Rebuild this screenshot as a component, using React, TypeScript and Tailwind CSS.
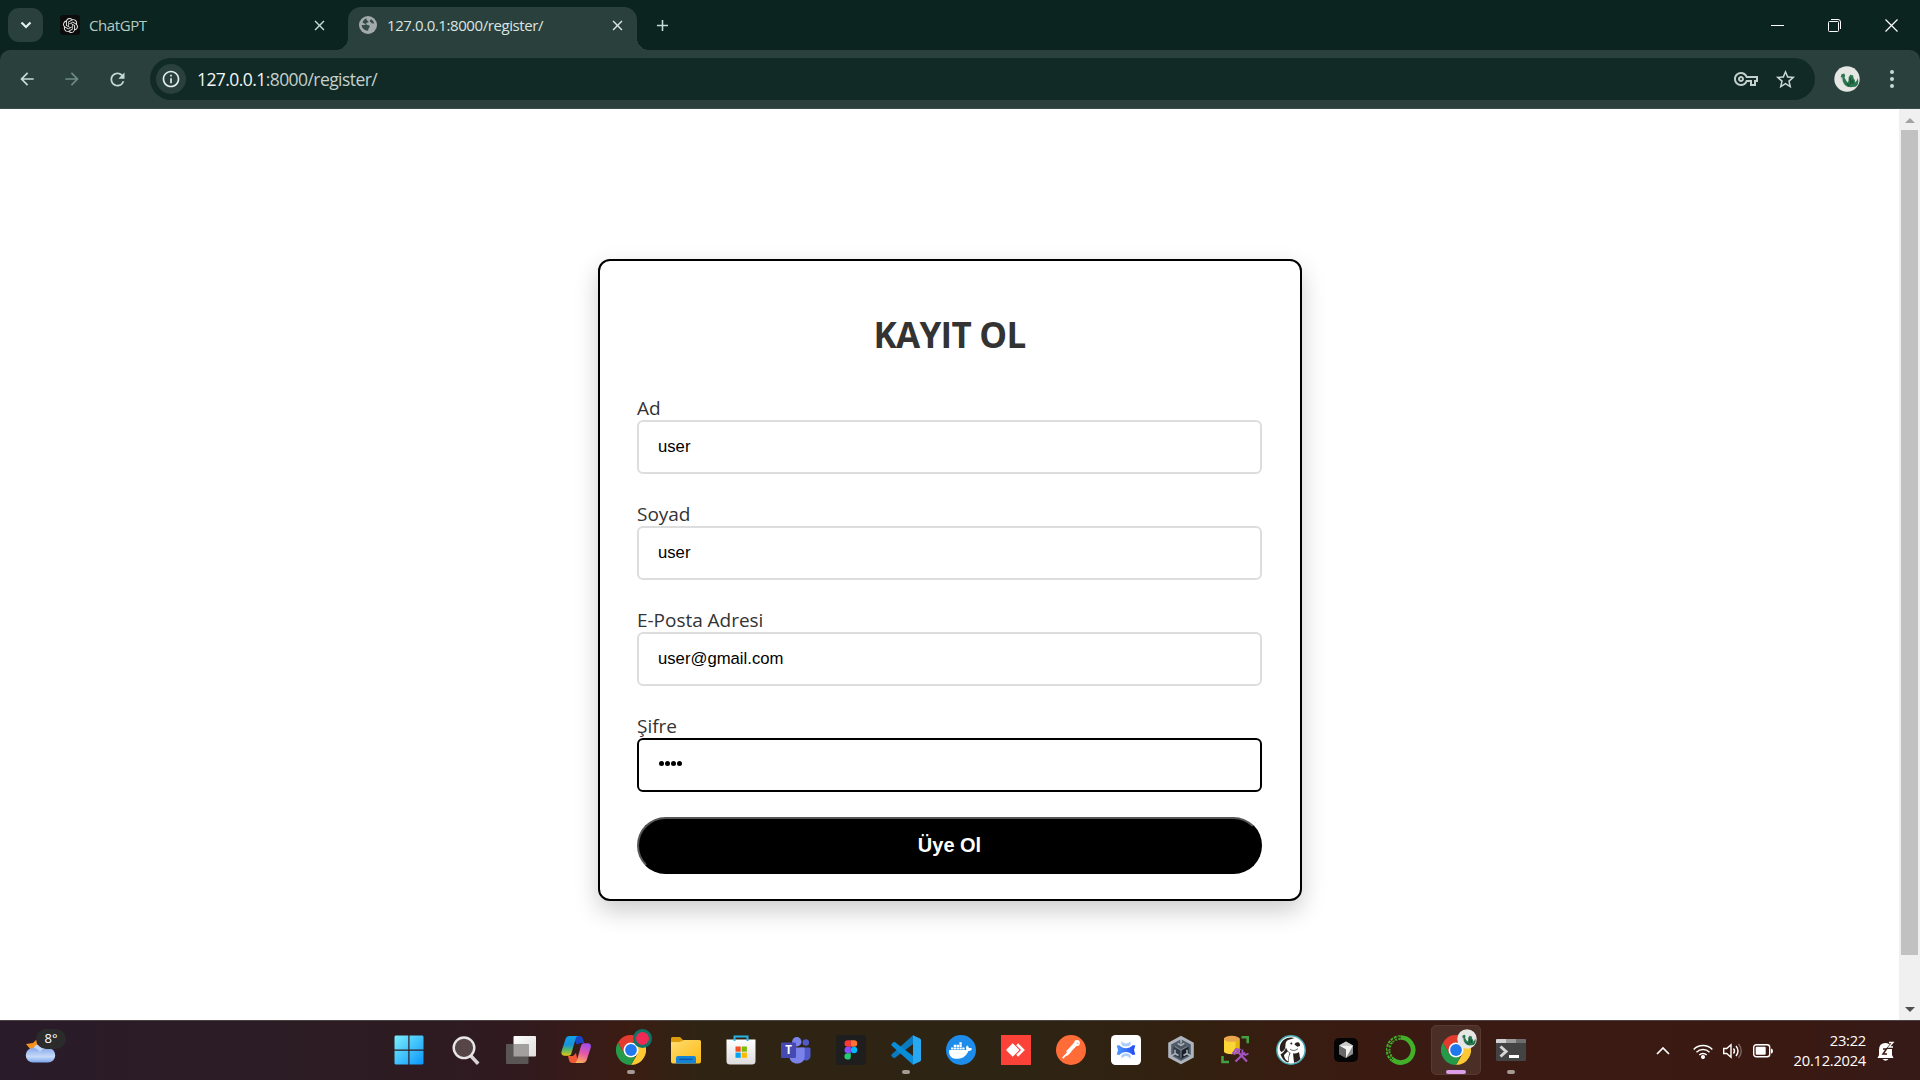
import React from "react";
import { SiOpenai, SiDocker } from "react-icons/si";
import { MdArrowBack, MdArrowForward, MdRefresh, MdInfoOutline, MdOutlineVpnKey, MdStarBorder, MdClose, MdAdd } from "react-icons/md";

const UI = "font-['Open_Sans','Noto_Sans',sans-serif]";

function Globe() {
  return (
    <svg viewBox="0 0 18 18" className="h-[18px] w-[18px]">
      <circle cx="9" cy="9" r="9" fill="#a3aaae" />
      <path d="M8 2.2c-1 1-.6 2.2.6 2.5 1.400.3 1 1.500 0 1.800-1.300.3-1.800 1.200-1 2 .9.9 2 .4 2.900 1.300.8.8-.2 1.600-.7 2.300-.4.600-.3 1.700-.9 2.700C5 14.600 2.700 11.800 2.700 9H6c.6 0 .7-.7.200-1L3.500 6.400C4.400 4 6 2.600 8 2.200zM12 3.200c1.600.9 2.700 2.300 3.100 4.100-.8.4-1.700.5-2.300-.3-.6-.7-1.700-.5-1.900-1.500-.2-.9.300-1.700 1.100-2.300z" fill="#344b47" />
    </svg>
  );
}

function Dragon({ size }: { size: "sm" | "lg" }) {
  return (
    <svg viewBox="0 0 26 26" className={size === "lg" ? "h-[26px] w-[26px]" : "h-5 w-5"}>
      <circle cx="13" cy="13" r="12.700" fill="#e6e6e5" />
      <path d="M7 10l2 4 2 4" stroke="#b9c4be" strokeWidth="2" fill="none" />
      <path d="M7.500 8.200l2.700-.6 1 1.800-.7 2 1.500 2.800 1.500 2.200 1-1.400.2-4 2-2.400 1.300 1 1-.6.6 3.200 1.200 1.800.6 2.500 1.400-2 1-2.300.6 3.500-1 3.500-2 1.500-5 .6-3-.6-2.600-1.700-1.900-3.500-.3-3.700-1.700-1z" fill="#2a7850" />
      <path d="M16 12l1 3.500-1 3M18.500 14l.5 4M13 17.500l2 2.500" stroke="#14502f" strokeWidth="1.200" fill="none" />
    </svg>
  );
}

function ChromeLogo() {
  return (
    <svg viewBox="0 0 30 30" className="h-[30px] w-[30px]">
      <path d="M28 7.500A15 15 0 0 1 15 30L21.500 18.700 21 7.500z" fill="#fcc934" />
      <path d="M15 30A15 15 0 0 1 2 7.500l6.500 11.200L15 22.500l4.500-.7z" fill="#259b4a" />
      <path d="M2 7.500A15 15 0 0 1 28 7.500H15l-5 3-1.500 8.200z" fill="#e33b2e" />
      <circle cx="15" cy="15" r="7.500" fill="#fff" />
      <circle cx="15" cy="15" r="5.900" fill="#1f78ee" />
    </svg>
  );
}

function WindowsLogo() {
  return (
    <svg viewBox="0 0 30 30" className="h-[30px] w-[30px]">
      <defs>
        <linearGradient id="win" x1="0" y1="0" x2="30" y2="30" gradientUnits="userSpaceOnUse">
          <stop stopColor="#7df0fc" />
          <stop offset="1" stopColor="#0894fb" />
        </linearGradient>
      </defs>
      <path d="M1.500.5h12.800v14H.5v-13zM15.500.5h13l1 1v13h-14zM.5 15.700h13.800v13.800H1.500l-1-1zM15.500 15.700h14v12.800l-1 1h-13z" fill="url(#win)" />
    </svg>
  );
}

function SearchGlyph() {
  return (
    <svg viewBox="0 0 30 30" className="h-[30px] w-[30px]">
      <path d="M19.500 20.500l6.500 7" stroke="#d9d5d7" strokeWidth="3.500" strokeLinecap="square" />
      <circle cx="13" cy="12.800" r="10.300" fill="#564549" stroke="#e8e6e7" strokeWidth="2.400" />
    </svg>
  );
}

function TaskView() {
  return (
    <svg viewBox="0 0 30 30" className="h-[30px] w-[30px]">
      <defs>
        <linearGradient id="tv" x1="0" y1="0" x2="1" y2="1">
          <stop stopColor="#fff" />
          <stop offset="1" stopColor="#dedcdd" />
        </linearGradient>
      </defs>
      <rect x="7.500" y="1" width="22.500" height="20.500" rx="1" fill="url(#tv)" />
      <rect x="0" y="9" width="22.500" height="20" rx="1" fill="#5a5656" />
      <path d="M7.500 9h15v12.500h-15z" fill="#a29f9f" />
    </svg>
  );
}

function Copilot() {
  return (
    <svg viewBox="0 0 30 30" className="h-[30px] w-[30px]">
      <defs>
        <linearGradient id="cpa" x1="0" y1="0" x2="0" y2="1">
          <stop stopColor="#10a1e8" />
          <stop offset=".45" stopColor="#1794dc" />
          <stop offset=".7" stopColor="#55b868" />
          <stop offset="1" stopColor="#e7c514" />
        </linearGradient>
        <linearGradient id="cpb" x1="0.600" y1="0" x2="0.300" y2="1">
          <stop stopColor="#a24bea" />
          <stop offset=".5" stopColor="#e65aa4" />
          <stop offset="1" stopColor="#fdb25a" />
        </linearGradient>
      </defs>
      <path d="M13 1h5.500c2 0 3 1 3.500 3l1.200 4h-3.700l-4 1.500z" fill="#1944c4" />
      <path d="M17 28h-5.500c-2 0-3-1-3.500-3l-1-4h5l3-3z" fill="#f15a35" />
      <path d="M8.500 1h9c-1.500 0-2.300 1-2.800 2.600L10.500 18c-.5 1.700-1.400 2.700-3 2.700h-4C.8 20.700-.1 18.800.6 16.300L4.500 4c.7-2 2-3 4-3z" fill="url(#cpa)" />
      <path d="M21.500 28H13c1.500 0 2.300-1 2.800-2.600L20 11c.5-1.700 1.400-2.700 3-2.700h3.800c2.700 0 3.600 1.900 2.900 4.400L25.700 25c-.7 2-2.200 3-4.200 3z" fill="url(#cpb)" />
    </svg>
  );
}

function Explorer() {
  return (
    <svg viewBox="0 0 30 30" className="h-[30px] w-[30px]">
      <defs>
        <linearGradient id="fld" x1="0" y1="0" x2="1" y2="1">
          <stop stopColor="#ffdc72" />
          <stop offset="1" stopColor="#fcba12" />
        </linearGradient>
      </defs>
      <path d="M0 3.500Q0 2 1.500 2H9l3.500 3.500H20V12H0z" fill="#dd9c0c" />
      <path d="M0 7h9l4-2h15.500Q30 5 30 6.500v20q0 2-2 2H2q-2 0-2-2z" fill="url(#fld)" />
      <path d="M5 28.500V23q0-2 2-2h16q2 0 2 2v5.500z" fill="#1584d8" />
      <path d="M8.500 24.300h13" stroke="#0c559b" strokeWidth="1.300" />
    </svg>
  );
}

function Store() {
  return (
    <svg viewBox="0 0 30 30" className="h-[30px] w-[30px]">
      <defs>
        <linearGradient id="sto" x1="0" y1="0" x2="0" y2="1">
          <stop stopColor="#fff" />
          <stop offset="1" stopColor="#dcdcdc" />
        </linearGradient>
      </defs>
      <path d="M.5 4.500h29V26q0 3.500-3.500 3.500H4Q.5 29.500.5 26z" fill="url(#sto)" />
      <path d="M8.500 6V1.500h13V6" fill="none" stroke="#27b3e8" strokeWidth="2" />
      <path d="M9.500 11.500h5.200v5.200H9.500z" fill="#f25022" />
      <path d="M15.700 11.500h5.200v5.200h-5.200z" fill="#7fba00" />
      <path d="M9.500 17.600h5.200v5.200H9.500z" fill="#00a4ef" />
      <path d="M15.700 17.600h5.200v5.200h-5.200z" fill="#ffb900" />
    </svg>
  );
}

function Teams() {
  return (
    <svg viewBox="0 0 30 30" className="h-[30px] w-[30px]">
      <circle cx="24.800" cy="7.500" r="3.200" fill="#5059c9" />
      <path d="M19 12.500h9q1.500 0 1.500 1.500v6.500c0 3-2 5-5 5l-5-1z" fill="#5059c9" />
      <circle cx="15.800" cy="6.800" r="4.700" fill="#7b83eb" />
      <path d="M8.500 12.500h14q1.200 0 1.200 1.200v7.500c0 5-3.500 7.300-7.500 7.300s-7.700-2.500-7.700-7.300z" fill="#7b83eb" />
      <rect x="0" y="7.500" width="15" height="15.500" rx="1.300" fill="#4549b4" />
      <text x="7.500" y="19.300" textAnchor="middle" fontSize="11.500" fontWeight="700" fill="#fff" fontFamily="Open Sans, sans-serif">T</text>
    </svg>
  );
}

function Figma() {
  return (
    <svg viewBox="0 0 30 30" className="h-[30px] w-[30px]">
      <rect width="30" height="30" rx="2.500" fill="#1e1e1e" />
      <path d="M14.800 5.200h-3a3.200 3.200 0 0 0 0 6.500h3z" fill="#ff3737" />
      <path d="M14.800 5.200h3.200a3.200 3.200 0 0 1 0 6.500h-3.200z" fill="#ff7237" />
      <path d="M14.800 11.700h-3a3.200 3.200 0 0 0 0 6.500h3z" fill="#874fff" />
      <circle cx="18" cy="15" r="3.200" fill="#00b6ff" />
      <path d="M14.800 18.200h-3a3.200 3.200 0 1 0 3 3.200z" fill="#24cb71" />
    </svg>
  );
}

function VsCode() {
  return (
    <svg viewBox="0 0 30 30" className="h-[30px] w-[30px]">
      <path d="M22 .3L.8 19.300c-.6.600-.6 1.300 0 1.900l1.600 1.500c.5.400 1.100.4 1.700 0L26 6z" fill="#0a7bc0" />
      <path d="M22 29.700L.8 10.700c-.6-.6-.6-1.300 0-1.900l1.600-1.500c.5-.4 1.100-.4 1.700 0L26 24z" fill="#0a8dd8" />
      <path d="M22 .2l7 3.200q1 .5 1 1.700v19.800q0 1.200-1 1.700l-7 3.200z" fill="#27a8f0" />
    </svg>
  );
}

function DockerLogo() {
  return (
    <span className="flex h-[30px] w-[30px] items-center justify-center rounded-full bg-[#1d8cea]">
      <SiDocker size={23} color="#fff" />
    </span>
  );
}

function AnyDesk() {
  return (
    <svg viewBox="0 0 30 30" className="h-[30px] w-[30px]">
      <path d="M0 0h30v30H0z" fill="#fb4238" />
      <path d="M5 15l6.700-6.700 6.700 6.700-6.700 6.700z" fill="#fff" />
      <path d="M16.200 9.200L22 15l-5.800 5.800" fill="none" stroke="#fff" strokeWidth="2.700" />
    </svg>
  );
}

function Postman() {
  return (
    <svg viewBox="0 0 30 30" className="h-[30px] w-[30px]" fill="none">
      <circle cx="15" cy="15" r="15" fill="#ff6c37" />
      <path d="M12.500 16.500l6-6.500" stroke="#fff" strokeWidth="4.200" strokeLinecap="round" />
      <path d="M12.500 17l-5.300 5.600M15 16.200L11 20" stroke="#fff" strokeWidth="1.700" strokeLinecap="round" />
      <path d="M11 15l6-6.200M14.500 17.500l5.500-5" stroke="#ff6c37" strokeWidth=".6" />
      <circle cx="21" cy="8" r="2.900" fill="#fff" />
      <path d="M20.800 7.800l1.700.9" stroke="#ff6c37" strokeWidth=".8" />
    </svg>
  );
}

function Tracker() {
  return (
    <svg viewBox="0 0 30 30" className="h-[30px] w-[30px]">
      <defs>
        <linearGradient id="trk" x1="0" y1="0" x2="1" y2="0">
          <stop stopColor="#4f9bff" />
          <stop offset="1" stopColor="#1f49f5" />
        </linearGradient>
      </defs>
      <rect width="30" height="30" rx="4.500" fill="#fff" />
      <path d="M10.500 6.200c2.700 3 6.300 3 9 0l.2 3c-1.700 3-7.700 3-9.400 0z" fill="#a9ccfb" />
      <path d="M10.500 23.800c2.700-3.700 6.300-3.700 9 0l.2-3c-1.700-3.500-7.700-3.500-9.400 0z" fill="#a9ccfb" />
      <path d="M5.700 10.500l2.700-.2c3.500 4 9.700 4 13.200 0l2.700.2-1.300 4.500 1.300 4.500-2.700.4c-3.500-4-9.700-4-13.200 0l-2.700-.4L7 15z" fill="url(#trk)" />
    </svg>
  );
}

function UnityHub() {
  return (
    <svg viewBox="0 0 30 30" className="h-[30px] w-[30px]">
      <path d="M15 .8l12.800 7v14.700L15 29.300 2.200 22.500V7.800z" fill="#adb4be" />
      <path d="M15 4.200l9.800 5.400v11L15 26l-9.800-5.400v-11z" fill="#525c68" />
      <path d="M15 7.500l7.500 4.200-7.500 4.300-7.500-4.300z" fill="#4c5662" />
      <path d="M7.500 11.700L15 16v8l-7.500-4.200z" fill="#303946" />
      <path d="M22.500 11.700L15 16v8l7.500-4.200z" fill="#171f29" />
      <path d="M8.700 11.300L15 15l6.300-3.700M15 15v8" stroke="#7d8794" strokeWidth="1" fill="none" />
      <path d="M15 3.500v5M11.700 8.300l3.300 2 3.300-2M5 21l4.500-2.600M9 14.800v3.700l3.500 2M25 21l-4.500-2.600M21 14.800v3.700l-3.500 2" stroke="#adb4be" strokeWidth="1.500" fill="none" />
    </svg>
  );
}

function DbTools() {
  return (
    <svg viewBox="0 0 30 30" className="h-[30px] w-[30px]">
      <path d="M3 3.500v13c0 3.500 15.500 3.500 15.500 0v-13z" fill="#fbd435" />
      <path d="M14.500 5v14c3-.5 4-1.400 4-2.500v-13z" fill="#e3b414" />
      <ellipse cx="10.700" cy="3.800" rx="7.800" ry="3" fill="#e9a64d" />
      <path d="M20.500 2.300h6.200v6M1.500 21v6h6.500" fill="none" stroke="#45a042" strokeWidth="2.600" />
      <path d="M15.500 15.500l10.500 11M14.500 26.500l9.500-9" stroke="#a453c2" strokeWidth="2.200" />
      <path d="M12 18l3-4 3.500.5-5 4.500zM21.500 14.500l-.3 3.500 3.300 2 3-1.500" fill="none" stroke="#a453c2" strokeWidth="1.800" />
    </svg>
  );
}

function Beaver() {
  return (
    <svg viewBox="0 0 30 30" className="h-[30px] w-[30px]">
      <circle cx="15" cy="15" r="14.200" fill="#fff" stroke="#46aab3" strokeWidth="1.500" />
      <path d="M7 5.500C10 2.500 15 1.800 18.500 3L14 4.500C10.500 5 9.500 7 9.500 10.500c-.2 4-2 6-4.200 6.500-1.700-1.500-1.800-3.500-1.300-6C4.500 8.500 5.500 7 7 5.500z" fill="#2a211f" />
      <path d="M4.500 19.500C7 18 9 16 10 12.500c1 3 2.500 4.500 4.500 5.500-1.500 2.500-2 5-1.500 8.500l-1 1C8.500 26.500 6 23.500 4.500 19.500z" fill="#2a211f" />
      <path d="M8 20l3.500-3.500 2 1.500c-1 3-1.500 5.500-.8 8.500C9.500 25.500 8.300 23 8 20z" fill="#fff" />
      <path d="M17 18.500c2.500 0 4.500-.5 6-1.500l.5 2.500c0 2 .5 3 1 4.500-2 2.200-4 3-6.500 3.700z" fill="#2a211f" />
      <path d="M18.500 9.500c1-2.500 4-3 5.300-.8l.2 2.300-2.700.8z" fill="#2a211f" />
      <circle cx="15.300" cy="8.500" r="1" fill="#2a211f" />
      <path d="M14 14c2 2 5.500 2 8-.5" stroke="#2a211f" strokeWidth=".7" fill="none" />
    </svg>
  );
}

function Cursor() {
  return (
    <svg viewBox="0 0 30 30" className="h-[30px] w-[30px]">
      <rect x="3" y="3" width="24" height="24" rx="5" fill="#050505" />
      <path d="M15 6.500l7 4v8.500l-7 4-7-4v-8.500z" fill="#8e8e8e" />
      <path d="M8 10.500l7-4 7 4z" fill="#c9c9c9" />
      <path d="M8 10.500h14L15 23v-8.500z" fill="#f2f2f2" />
      <path d="M8 10.500l7 4V23l-7-4z" fill="#686868" />
    </svg>
  );
}

function Anaconda() {
  return (
    <svg viewBox="0 0 30 30" className="h-[30px] w-[30px]" fill="none">
      <path d="M14.500 2.500a12.500 12.500 0 1 1-8 22" stroke="#43b02a" strokeWidth="4.700" />
      <path d="M14.500 2.500A12.500 12.500 0 0 0 6.500 24.500" stroke="#43b02a" strokeWidth="4.700" strokeDasharray="2.600 .9" />
      <path d="M14.500 2.500A12.500 12.500 0 0 0 6.500 24.500" stroke="#35160f" strokeWidth="1" strokeDasharray="2 1.500" />
      <path d="M13 1.200L11 5M7 4l1.500 3M3 9l4 1.500M1 14l4.500-1M1.500 20l4-2.500" stroke="#35160f" strokeWidth=".9" />
    </svg>
  );
}

function Terminal() {
  return (
    <svg viewBox="0 0 30 30" className="h-[30px] w-[30px]">
      <rect x="0" y="4" width="30" height="22" rx="1.500" fill="#434343" />
      <path d="M0 8V5q0-1 1-1h9v4z" fill="#d2d2d2" />
      <path d="M10 4h10v4H10z" fill="#9b9b9b" />
      <path d="M20 4h9q1 0 1 1v3H20z" fill="#6d6d6d" />
      <path d="M4.500 11.500l5.500 5-5.500 5" fill="none" stroke="#d6d6d6" strokeWidth="3" />
      <path d="M13 21.500h10" stroke="#fff" strokeWidth="3" />
    </svg>
  );
}

function Weather() {
  return (
    <svg viewBox="0 0 32 32" className="h-8 w-8">
      <defs>
        <linearGradient id="cl" x1="0" y1="0" x2="0" y2="1">
          <stop stopColor="#86a9ea" />
          <stop offset=".6" stopColor="#c8daf8" />
          <stop offset="1" stopColor="#7aa5ed" />
        </linearGradient>
      </defs>
      <path d="M1 10l7-1 4-4v9l-6 2z" fill="#f6931e" />
      <path d="M8 16a7.500 7.500 0 0 1 14-2l-2 8H8z" fill="#c2d6fa" />
      <path d="M8 14c3 0 5.500 1.500 7 4 2-3 4.500-4 8-4a7 7 0 0 1 0 14.500H8A7.200 7.200 0 0 1 8 14z" fill="url(#cl)" />
    </svg>
  );
}

const apps: { id: string; icon: React.ReactNode; mark?: "dot" | "active"; badge?: "record" | "profile" }[] = [
  { id: "search", icon: <SearchGlyph /> },
  { id: "taskview", icon: <TaskView /> },
  { id: "copilot", icon: <Copilot /> },
  { id: "chrome", icon: <ChromeLogo />, mark: "dot", badge: "record" },
  { id: "explorer", icon: <Explorer /> },
  { id: "store", icon: <Store /> },
  { id: "teams", icon: <Teams /> },
  { id: "figma", icon: <Figma /> },
  { id: "vscode", icon: <VsCode />, mark: "dot" },
  { id: "docker", icon: <DockerLogo /> },
  { id: "anydesk", icon: <AnyDesk /> },
  { id: "postman", icon: <Postman /> },
  { id: "tracker", icon: <Tracker /> },
  { id: "unity", icon: <UnityHub /> },
  { id: "db", icon: <DbTools /> },
  { id: "dbeaver", icon: <Beaver /> },
  { id: "cursor", icon: <Cursor /> },
  { id: "anaconda", icon: <Anaconda /> },
  { id: "chrome-profile", icon: <ChromeLogo />, mark: "active", badge: "profile" },
  { id: "terminal", icon: <Terminal />, mark: "dot" },
];

function TabStrip() {
  return (
    <div className="flex h-[50px] bg-[#0b2420] text-[#dbe5e2]">
      <div className="flex h-full w-[348px] items-center pl-2">
        <div className="flex h-[34px] w-[35px] items-center justify-center rounded-[11px] bg-[#29403c]">
          <svg viewBox="0 0 12 8" className="h-2 w-3"><path d="M1.500 1.500L6 6l4.500-4.500" fill="none" stroke="#e4f0ec" strokeWidth="2.200" /></svg>
        </div>
        <div className="ml-[17px] flex h-5 w-5 items-center justify-center rounded-[3px] bg-[#0c0c0d]">
          <SiOpenai size={15} color="#e6e6e6" />
        </div>
        <span className="ml-[9px] w-[222px] text-[15px] tracking-[-0.4px] text-[#b5cbc4]">ChatGPT</span>
        <MdClose size={17} color="#c4dcd5" />
      </div>
      <div className="relative mt-[7px] flex h-[43px] w-[289px] items-center rounded-t-[13px] bg-[#29403c] pb-[8px] pl-[11px] pt-[1px]">
        <span className="absolute -left-3 bottom-0 h-3 w-3 bg-[radial-gradient(circle_at_0_0,transparent_12px,#29403c_12px)]" />
        <span className="absolute -right-3 bottom-0 h-3 w-3 bg-[radial-gradient(circle_at_100%_0,transparent_12px,#29403c_12px)]" />
        <Globe />
        <span className="ml-[10px] w-[222px] whitespace-nowrap text-[15px] tracking-[-0.42px]">127.0.0.1:8000/register/</span>
        <MdClose size={17} />
      </div>
      <div className="flex items-center pl-4"><MdAdd size={19} color="#c4dcd5" /></div>
      <div className="ml-auto flex items-center gap-11 pr-[22px]">
        <svg viewBox="0 0 13 13" className="h-[13px] w-[13px]"><path d="M0 6.500h13" stroke="#fff" /></svg>
        <svg viewBox="0 0 13 13" className="h-[13px] w-[13px]" fill="none" stroke="#fff"><rect x=".5" y="2.500" width="10" height="10" rx="1" /><path d="M3 .5h7q2.500 0 2.500 2.500v7" /></svg>
        <svg viewBox="0 0 13 13" className="h-[13px] w-[13px]"><path d="M.5.5l12 12M12.500.5l-12 12" stroke="#fff" strokeWidth="1.200" /></svg>
      </div>
    </div>
  );
}

function Toolbar() {
  return (
    <div className="bg-[#0b2420]">
      <div className="flex h-[59px] items-center rounded-t-[10px] border-b border-[#3a4f4b] bg-[#29403c] pl-[17px] pr-3.5">
        <div className="flex w-[133px] items-center gap-[25px] text-[#c2dcd3]">
          <MdArrowBack size={20} />
          <MdArrowForward size={20} color="#6f8a83" />
          <MdRefresh size={21} />
        </div>
        <div className="flex h-[42px] flex-1 items-center rounded-full bg-[#112a26] pl-1.5 pr-[18px]">
          <span className="flex h-[30px] w-[30px] items-center justify-center rounded-full bg-[#29403c]">
            <MdInfoOutline size={20} color="#e4eeeb" />
          </span>
          <span className="ml-[11px] pt-px text-[17.500px] tracking-[-0.57px] text-[#c4d0cc]">
            <span className="text-[#f2f6f5]">127.0.0.1</span>:8000/register/
          </span>
          <MdOutlineVpnKey size={24} color="#c2cfcb" className="ml-auto" />
          <MdStarBorder size={23} color="#c9d6d2" className="ml-4" />
        </div>
        <div className="ml-[19px]"><Dragon size="lg" /></div>
        <div className="ml-[30px] mr-[12px] flex flex-col gap-[3px]">
          <span className="h-1 w-1 rounded-full bg-[#c2dcd3]" />
          <span className="h-1 w-1 rounded-full bg-[#c2dcd3]" />
          <span className="h-1 w-1 rounded-full bg-[#c2dcd3]" />
        </div>
      </div>
    </div>
  );
}

function Field({ label, value, focused }: { label: string; value: string; focused?: boolean }) {
  return (
    <div className="mb-[26px] flex h-20 flex-col">
      <label className={`${UI} h-[26px] whitespace-nowrap text-[19px] leading-[29px] tracking-[-0.03px] text-[#333]`}>{label}</label>
      <div className={`flex h-[54px] items-center rounded-[6px] border-2 pl-[19px] font-['Liberation_Sans',Arial,sans-serif] text-[16.700px] text-black ${focused ? "border-black" : "border-[#ddd]"}`}>
        {focused ? (
          <span className="ml-px flex gap-[1px] pb-[3px]">
            {value.split("").map((_, i) => <span key={i} className="h-[5px] w-[5px] rounded-full bg-black" />)}
          </span>
        ) : value}
      </div>
    </div>
  );
}

function RegisterPage() {
  return (
    <div className="flex h-[911px] bg-white">
      <main className="flex flex-1 items-start justify-center pl-px pt-[150px]">
        <div className="flex h-[642px] w-[704px] flex-col rounded-[12px] border-2 border-black bg-white pl-[37px] pr-[38px] pt-[50px] shadow-[0_10px_25px_rgba(0,0,0,0.200)]">
          <h1 className={`${UI} mb-[36px] h-[47px] text-center text-[35px] font-bold leading-[47px] tracking-[-0.7px] text-[#333]`}>KAYIT OL</h1>
          <div>
            <Field label="Ad" value="user" />
            <Field label="Soyad" value="user" />
            <Field label="E-Posta Adresi" value="user@gmail.com" />
            <Field label="Şifre" value="1234" focused />
          </div>
          <button className="-mt-px h-[57px] w-full shrink-0 rounded-full border-2 border-b-black border-l-[#555] border-r-black border-t-[#555] bg-black pb-0.5 font-['Liberation_Sans',Arial,sans-serif] text-[20px] font-bold text-white">Üye Ol</button>
        </div>
      </main>
      <div className="flex w-[21px] flex-col items-center bg-[#f0f0f0]">
        <svg viewBox="0 0 10 5" className="mt-[9px] h-[5px] w-2.5"><path d="M0 5l5-5 5 5z" fill="#a3a3a3" /></svg>
        <div className="mt-[7px] h-[825px] w-[17px] bg-[#c1c1c1]" />
        <svg viewBox="0 0 10 5" className="mt-[52px] h-[5px] w-2.5"><path d="M0 0l5 5 5-5z" fill="#505050" /></svg>
      </div>
    </div>
  );
}

function Taskbar() {
  return (
    <div className="flex h-[60px] border-t border-[#4b4342] bg-[linear-gradient(90deg,#291b29_0,#2c1c24_300px,#2f1a20_500px,#3b1c13_625px,#2f2414_700px,#2e2414_1040px,#33200f_1200px,#3a1b12_1340px,#3a1912_1800px,#351a18_1920px)] text-white">
      <div className="relative w-[394px] pl-[25px] pt-[13px]">
        <Weather />
        <span className={`${UI} absolute left-[36px] top-2 flex h-5 w-[30px] items-center justify-center rounded-full bg-[#2b2b2b] text-[13px]`}>8°</span>
      </div>
      <div className="flex items-start pt-[14px] pr-[14px]"><WindowsLogo /></div>
      <div className="flex">
        {apps.map((a) => (
          <div key={a.id} className="flex w-[55px] justify-center pt-1">
            <div className={`relative flex h-[50px] w-[50px] items-center justify-center rounded-[5px] ${a.mark === "active" ? "border border-[#573b33] bg-[#4b2e26]" : ""}`}>
              {a.icon}
              {a.badge === "record" && <span className="absolute right-[4px] top-[4px] h-[19px] w-[19px] rounded-full border-[3px] border-[#0e7466] bg-[#f02a55]" />}
              {a.badge === "profile" && <span className="absolute right-[3px] top-[3px]"><Dragon size="sm" /></span>}
              {a.mark === "dot" && <span className="absolute bottom-[1px] h-1 w-2 rounded-full bg-[#a39a93]" />}
              {a.mark === "active" && <span className="absolute bottom-0 h-1 w-5 rounded-full bg-[#dc9ee6]" />}
            </div>
          </div>
        ))}
      </div>
      <div className="ml-auto flex items-center pr-[25px]">
        <svg viewBox="0 0 14 8" className="h-2 w-3.5"><path d="M1 7l6-6 6 6" fill="none" stroke="#fff" strokeWidth="1.700" /></svg>
        <svg viewBox="0 0 20 16" className="ml-[23px] h-4 w-5" fill="none" stroke="#fff" strokeWidth="1.500">
          <path d="M.7 6.500a13 13 0 0 1 18.600 0M3.500 9.300a9.200 9.200 0 0 1 13 0M6.300 12a5.300 5.300 0 0 1 7.400 0" />
          <circle cx="10" cy="14" r="1.300" fill="#fff" />
        </svg>
        <svg viewBox="0 0 20 16" className="ml-[10px] h-4 w-5" fill="none" stroke="#fff" strokeWidth="1.400">
          <path d="M.7 5.500h3L8 1.700v12.600L3.700 10.500h-3zM10.500 5.500q2 2.500 0 5M13 3q4 5 0 10" />
          <path d="M15.500 1q5.500 7 0 14" stroke="#7c635e" />
        </svg>
        <svg viewBox="0 0 20 14" className="ml-[10px] h-3.5 w-5"><rect x=".7" y=".7" width="16" height="12" rx="2.500" fill="none" stroke="#fff" strokeWidth="1.400" /><rect x="2.700" y="2.700" width="10" height="8" rx="1" fill="#fff" /><path d="M18 4.500q2 0 2 2.500t-2 2.500z" fill="#fff" /></svg>
        <div className={`${UI} ml-[20px] w-[73px] whitespace-nowrap pb-px text-right text-[14.700px] leading-5 tracking-[-0.25px]`}>
          <div>23:22</div>
          <div>20.12.2024</div>
        </div>
        <svg viewBox="0 0 18 20" className="ml-[11px] h-5 w-[18px]">
          <path d="M2 9q0-7 6.500-7T15 9v5l1.500 3H.5L2 14z" fill="#fff" />
          <path d="M5.500 18h6q-3 3.500-6 0z" fill="#fff" />
          <path d="M11.500 1.500H16l-4 5h4" fill="none" stroke="#3a1912" strokeWidth="3" />
          <path d="M6 8h3.500l-3.500 5h4" fill="none" stroke="#3a1912" strokeWidth="1.500" />
          <path d="M12 1.500h4l-4 4.500h4" fill="none" stroke="#fff" strokeWidth="1.300" />
        </svg>
      </div>
    </div>
  );
}

export default function App() {
  return (
    <div className={`${UI} flex h-[1080px] w-[1920px] flex-col overflow-hidden`}>
      <TabStrip />
      <Toolbar />
      <RegisterPage />
      <Taskbar />
    </div>
  );
}
